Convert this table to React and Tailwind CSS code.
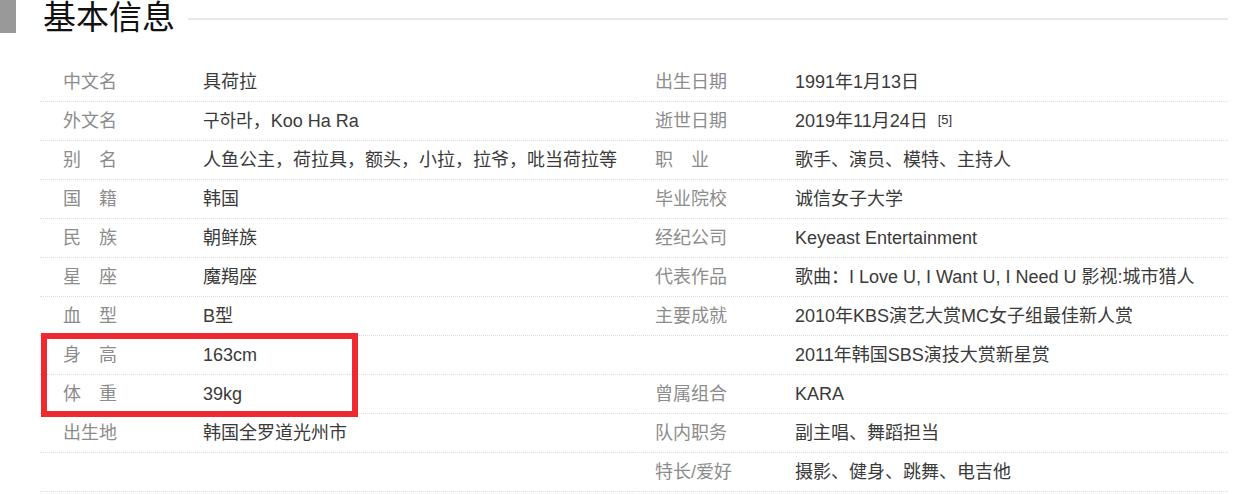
import React from 'react';

const FONT = { fontFamily: '"Liberation Sans", Arial, "Noto Sans CJK SC", sans-serif' };

const leftRows = [
  { label: '中文名', value: '具荷拉' },
  { label: '外文名', value: '구하라，Koo Ha Ra' },
  { label: '别　名', value: '人鱼公主，荷拉具，额头，小拉，拉爷，吡当荷拉等' },
  { label: '国　籍', value: '韩国' },
  { label: '民　族', value: '朝鲜族' },
  { label: '星　座', value: '魔羯座' },
  { label: '血　型', value: 'B型' },
  { label: '身　高', value: '163cm' },
  { label: '体　重', value: '39kg' },
  { label: '出生地', value: '韩国全罗道光州市' },
  { label: '', value: '' },
];

const rightRows = [
  { label: '出生日期', value: '1991年1月13日' },
  { label: '逝世日期', value: '2019年11月24日', note: '[5]' },
  { label: '职　业', value: '歌手、演员、模特、主持人' },
  { label: '毕业院校', value: '诚信女子大学' },
  { label: '经纪公司', value: 'Keyeast Entertainment' },
  { label: '代表作品', value: '歌曲：I Love U, I Want U, I Need U 影视:城市猎人' },
  { label: '主要成就', value: '2010年KBS演艺大赏MC女子组最佳新人赏' },
  { label: '', value: '2011年韩国SBS演技大赏新星赏' },
  { label: '曾属组合', value: 'KARA' },
  { label: '队内职务', value: '副主唱、舞蹈担当' },
  { label: '特长/爱好', value: '摄影、健身、跳舞、电吉他' },
];

const Row = ({ row }) => (
  <div className="flex h-[39px] leading-[38px] border-b border-dotted border-[#dcdcdc] pl-[23px] whitespace-nowrap text-[18px]">
    <div className="w-[140px] shrink-0 text-[#8c8c8c]">{row.label}</div>
    <div className="text-[#3a3a3a]">
      {row.value}
      {row.note && (
        <sup className="ml-[10px] text-[13px] text-[#333] relative -top-[3px]">{row.note}</sup>
      )}
    </div>
  </div>
);

export default function App() {
  return (
    <div className="w-[1242px] h-[494px] bg-white overflow-hidden" style={FONT}>
      <div className="flex items-start h-[36px]">
        <div className="w-[16px] h-[33px] bg-[#999]" />
        <h2 className="ml-[27px] text-[33px] leading-[36px] text-[#111] font-normal">基本信息</h2>
        <div className="ml-[13px] mt-[18px] w-[1040px] h-[2px] bg-[#e8e8e8]" />
      </div>
      <div className="flex mt-[27px] ml-[40px] w-[1188px]">
        <div className="relative w-[592px]">
          {leftRows.map((row, i) => (
            <Row key={i} row={row} />
          ))}
          <div className="absolute left-[1px] top-[270px] w-[317px] h-[84px] border-[6px] border-[#ee2a30]" />
        </div>
        <div className="w-[596px]">
          {rightRows.map((row, i) => (
            <Row key={i} row={row} />
          ))}
        </div>
      </div>
    </div>
  );
}
